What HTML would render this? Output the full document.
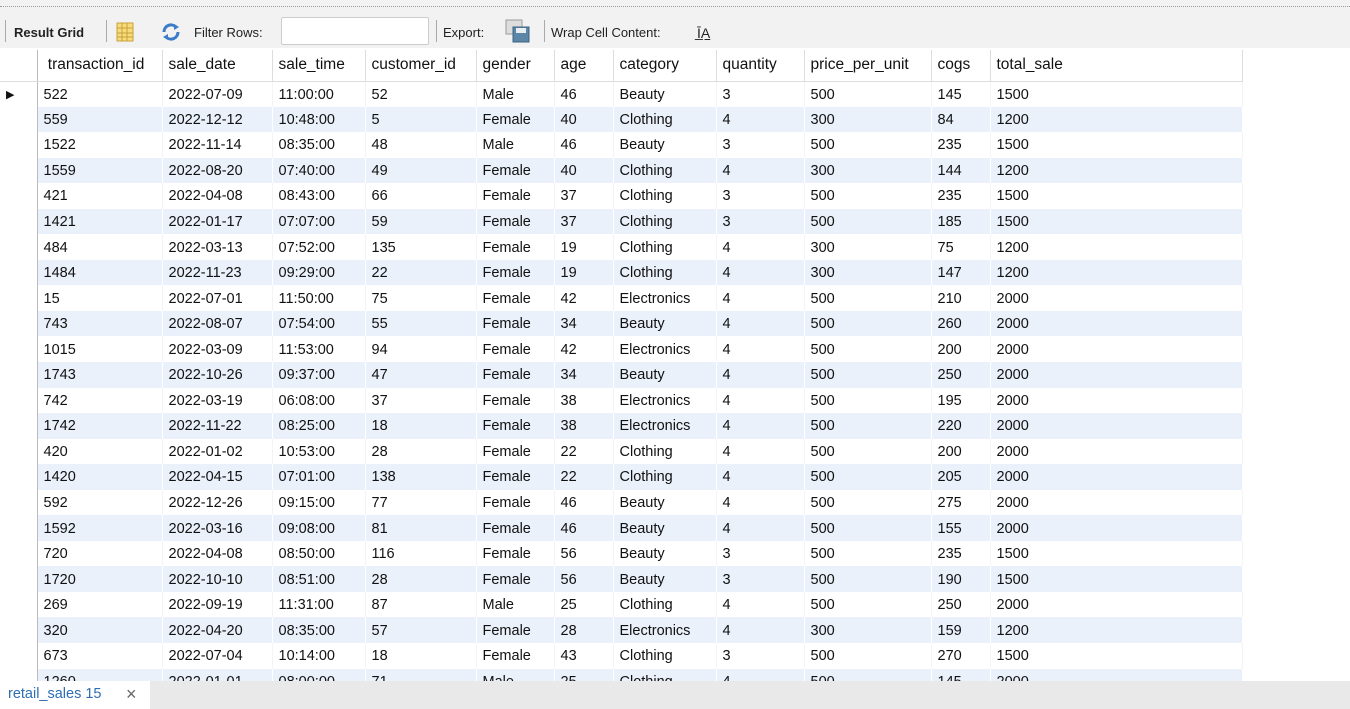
<!DOCTYPE html>
<html><head><style>
body{margin:0;width:1350px;height:709px;overflow:hidden;background:#fff;font-family:"Liberation Sans",Tahoma,sans-serif;position:relative}
.tb{position:absolute;left:0;top:0;width:1350px;height:48px;background:#f2f2f2}
.dots{position:absolute;left:0;top:6px;width:1350px;border-top:1px dotted #999}
.tt{position:absolute;top:25px;font-size:13px;color:#222}
.sep{position:absolute;top:20px;width:1px;height:22px;background:#aaa}
table{position:absolute;left:0;top:50px;border-collapse:collapse;font-size:14.5px;color:#111}
td,th{padding:1px 0 0 6px;height:25.55px;text-align:left;font-weight:normal;white-space:nowrap;border-right:1px solid #f4f4f4;box-sizing:border-box}
tr.b td{border-right:1px solid #fff}
th{height:31px;border-bottom:1px solid #ddd;border-right:1px solid #ddd;font-size:15.5px;padding-top:0}
tr.b td{background:#eaf1fb}
td.h{background:#fff!important;border-right:1px solid #bbb!important}
.tab{position:absolute;left:0;top:681px;width:1350px;height:28px;background:#e9e9e9}
</style></head><body>
<div class="tb"><div class="dots"></div>
<div class="sep" style="left:5px"></div>
<div class="tt" style="left:14px;font-weight:bold">Result Grid</div>
<div class="sep" style="left:106px"></div>
<svg style="position:absolute;left:116px;top:22px" width="18" height="20"><rect x="1" y="1" width="16" height="18" fill="#f6dc7a" stroke="#c9a23a"/><path d="M6 1v18M11 1v18M1 6h16M1 11h16M1 15h16" stroke="#c9a23a"/></svg>
<svg style="position:absolute;left:160px;top:22px" width="22" height="20"><path d="M4 10a7 7 0 0 1 12-5" stroke="#3a7cc8" stroke-width="3" fill="none"/><path d="M18 10a7 7 0 0 1-12 5" stroke="#3a7cc8" stroke-width="3" fill="none"/><path d="M14 2l5 3-5 3z M8 12l-5 3 5 3z" fill="#3a7cc8"/></svg>
<div class="tt" style="left:194px">Filter Rows:</div>
<div style="position:absolute;left:281px;top:17px;width:146px;height:26px;background:#fff;border:1px solid #ccc;border-radius:2px"></div>
<div class="sep" style="left:436px"></div>
<div class="tt" style="left:443px">Export:</div>
<svg style="position:absolute;left:504px;top:19px" width="28" height="24"><rect x="2" y="1" width="16" height="14" fill="#ddd" stroke="#999"/><rect x="9" y="8" width="16" height="15" fill="#5b86a8" stroke="#3d6480"/><rect x="12" y="9" width="10" height="5" fill="#e8eef3"/></svg>
<div class="sep" style="left:544px"></div>
<div class="tt" style="left:551px">Wrap Cell Content:</div>
<div class="tt" style="left:697px;font-size:14px;text-decoration:underline">Ī̲A</div>
</div>
<table>
<colgroup><col style="width:37px"><col style="width:125px"><col style="width:110px"><col style="width:93px"><col style="width:111px"><col style="width:78px"><col style="width:59px"><col style="width:103px"><col style="width:88px"><col style="width:127px"><col style="width:59px"><col style="width:252px"></colgroup>
<tr><th style="border-right:1px solid #bbb"></th><th>&nbsp;transaction_id</th><th>sale_date</th><th>sale_time</th><th>customer_id</th><th>gender</th><th>age</th><th>category</th><th>quantity</th><th>price_per_unit</th><th>cogs</th><th>total_sale</th></tr>
<tr><td class="h" style="font-size:11px">&#9654;</td><td>522</td><td>2022-07-09</td><td>11:00:00</td><td>52</td><td>Male</td><td>46</td><td>Beauty</td><td>3</td><td>500</td><td>145</td><td>1500</td></tr>
<tr class="b"><td class="h"></td><td>559</td><td>2022-12-12</td><td>10:48:00</td><td>5</td><td>Female</td><td>40</td><td>Clothing</td><td>4</td><td>300</td><td>84</td><td>1200</td></tr>
<tr><td class="h"></td><td>1522</td><td>2022-11-14</td><td>08:35:00</td><td>48</td><td>Male</td><td>46</td><td>Beauty</td><td>3</td><td>500</td><td>235</td><td>1500</td></tr>
<tr class="b"><td class="h"></td><td>1559</td><td>2022-08-20</td><td>07:40:00</td><td>49</td><td>Female</td><td>40</td><td>Clothing</td><td>4</td><td>300</td><td>144</td><td>1200</td></tr>
<tr><td class="h"></td><td>421</td><td>2022-04-08</td><td>08:43:00</td><td>66</td><td>Female</td><td>37</td><td>Clothing</td><td>3</td><td>500</td><td>235</td><td>1500</td></tr>
<tr class="b"><td class="h"></td><td>1421</td><td>2022-01-17</td><td>07:07:00</td><td>59</td><td>Female</td><td>37</td><td>Clothing</td><td>3</td><td>500</td><td>185</td><td>1500</td></tr>
<tr><td class="h"></td><td>484</td><td>2022-03-13</td><td>07:52:00</td><td>135</td><td>Female</td><td>19</td><td>Clothing</td><td>4</td><td>300</td><td>75</td><td>1200</td></tr>
<tr class="b"><td class="h"></td><td>1484</td><td>2022-11-23</td><td>09:29:00</td><td>22</td><td>Female</td><td>19</td><td>Clothing</td><td>4</td><td>300</td><td>147</td><td>1200</td></tr>
<tr><td class="h"></td><td>15</td><td>2022-07-01</td><td>11:50:00</td><td>75</td><td>Female</td><td>42</td><td>Electronics</td><td>4</td><td>500</td><td>210</td><td>2000</td></tr>
<tr class="b"><td class="h"></td><td>743</td><td>2022-08-07</td><td>07:54:00</td><td>55</td><td>Female</td><td>34</td><td>Beauty</td><td>4</td><td>500</td><td>260</td><td>2000</td></tr>
<tr><td class="h"></td><td>1015</td><td>2022-03-09</td><td>11:53:00</td><td>94</td><td>Female</td><td>42</td><td>Electronics</td><td>4</td><td>500</td><td>200</td><td>2000</td></tr>
<tr class="b"><td class="h"></td><td>1743</td><td>2022-10-26</td><td>09:37:00</td><td>47</td><td>Female</td><td>34</td><td>Beauty</td><td>4</td><td>500</td><td>250</td><td>2000</td></tr>
<tr><td class="h"></td><td>742</td><td>2022-03-19</td><td>06:08:00</td><td>37</td><td>Female</td><td>38</td><td>Electronics</td><td>4</td><td>500</td><td>195</td><td>2000</td></tr>
<tr class="b"><td class="h"></td><td>1742</td><td>2022-11-22</td><td>08:25:00</td><td>18</td><td>Female</td><td>38</td><td>Electronics</td><td>4</td><td>500</td><td>220</td><td>2000</td></tr>
<tr><td class="h"></td><td>420</td><td>2022-01-02</td><td>10:53:00</td><td>28</td><td>Female</td><td>22</td><td>Clothing</td><td>4</td><td>500</td><td>200</td><td>2000</td></tr>
<tr class="b"><td class="h"></td><td>1420</td><td>2022-04-15</td><td>07:01:00</td><td>138</td><td>Female</td><td>22</td><td>Clothing</td><td>4</td><td>500</td><td>205</td><td>2000</td></tr>
<tr><td class="h"></td><td>592</td><td>2022-12-26</td><td>09:15:00</td><td>77</td><td>Female</td><td>46</td><td>Beauty</td><td>4</td><td>500</td><td>275</td><td>2000</td></tr>
<tr class="b"><td class="h"></td><td>1592</td><td>2022-03-16</td><td>09:08:00</td><td>81</td><td>Female</td><td>46</td><td>Beauty</td><td>4</td><td>500</td><td>155</td><td>2000</td></tr>
<tr><td class="h"></td><td>720</td><td>2022-04-08</td><td>08:50:00</td><td>116</td><td>Female</td><td>56</td><td>Beauty</td><td>3</td><td>500</td><td>235</td><td>1500</td></tr>
<tr class="b"><td class="h"></td><td>1720</td><td>2022-10-10</td><td>08:51:00</td><td>28</td><td>Female</td><td>56</td><td>Beauty</td><td>3</td><td>500</td><td>190</td><td>1500</td></tr>
<tr><td class="h"></td><td>269</td><td>2022-09-19</td><td>11:31:00</td><td>87</td><td>Male</td><td>25</td><td>Clothing</td><td>4</td><td>500</td><td>250</td><td>2000</td></tr>
<tr class="b"><td class="h"></td><td>320</td><td>2022-04-20</td><td>08:35:00</td><td>57</td><td>Female</td><td>28</td><td>Electronics</td><td>4</td><td>300</td><td>159</td><td>1200</td></tr>
<tr><td class="h"></td><td>673</td><td>2022-07-04</td><td>10:14:00</td><td>18</td><td>Female</td><td>43</td><td>Clothing</td><td>3</td><td>500</td><td>270</td><td>1500</td></tr>
<tr class="b"><td class="h"></td><td>1260</td><td>2022-01-01</td><td>08:00:00</td><td>71</td><td>Male</td><td>25</td><td>Clothing</td><td>4</td><td>500</td><td>145</td><td>2000</td></tr>
</table>
<div class="tab"><div style="position:absolute;left:0;top:0;width:150px;height:28px;background:#fff"></div>
<div style="position:absolute;left:8px;top:5px;font-size:14.5px;color:#2f6db5">retail_sales 15</div>
<div style="position:absolute;left:126px;top:3px;font-size:18px;color:#666">×</div></div>
</body></html>
